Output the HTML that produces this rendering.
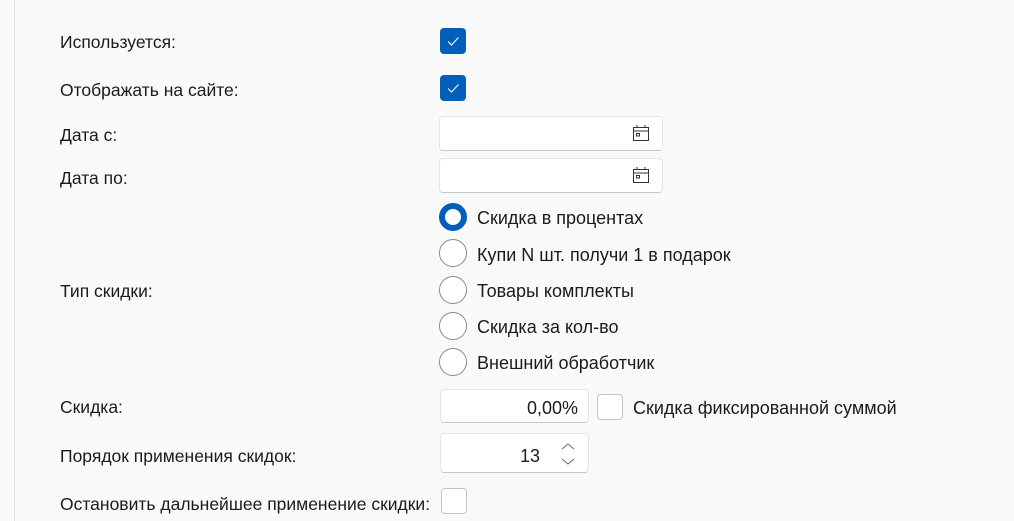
<!DOCTYPE html>
<html><head><meta charset="utf-8"><style>
body{margin:0;width:1014px;height:521px;background:#f9f9f9;font-family:"Liberation Sans",sans-serif;color:#1b1b1b;position:relative;overflow:hidden}
.vl{position:absolute;left:14px;top:0;width:1px;height:521px;background:#e2e2e2}
.t{position:absolute;font-size:17.5px;line-height:20px;white-space:nowrap}
.t2{font-size:18px}
.cb{position:absolute;width:26px;height:26px;border-radius:4px;background:#005fb8;box-sizing:border-box}
.cb.e{background:#fff;border:1px solid #c5c5c5}
.box{position:absolute;background:#fff;border:1px solid #e5e5e5;border-bottom-color:#c8c8c8;border-radius:4px;box-sizing:border-box}
.r{position:absolute;left:439px;width:28px;height:28px;border-radius:50%;background:#fff;border:1px solid #8a8a8a;box-sizing:border-box}
.r.on{border:6px solid #005fb8}
</style></head><body>
<div class="vl"></div>
<div class="t" style="left:60px;top:32px">Используется:</div>
<div class="cb" style="left:440px;top:28px"><svg width="26" height="26"><path d="M8 13.5l3.5 3.5 7-7.5" fill="none" stroke="#fff" stroke-width="1.1"/></svg></div>
<div class="t" style="left:60px;top:80px">Отображать на сайте:</div>
<div class="cb" style="left:440px;top:75px"><svg width="26" height="26"><path d="M8 13.5l3.5 3.5 7-7.5" fill="none" stroke="#fff" stroke-width="1.1"/></svg></div>
<div class="t" style="left:60px;top:125px">Дата с:</div>
<div class="box" style="left:439px;top:116px;width:224px;height:35px"><svg style="position:absolute;left:191px;top:6px" width="20" height="20"><rect x="2.5" y="4.5" width="15" height="13" fill="none" stroke="#333" stroke-width="1"/><path d="M2.5 8h15M6 2v3M14 2v3" stroke="#333"/><rect x="5.5" y="10.5" width="3" height="2.5" fill="none" stroke="#333"/></svg></div>
<div class="t" style="left:60px;top:168px">Дата по:</div>
<div class="box" style="left:439px;top:158px;width:224px;height:35px"><svg style="position:absolute;left:191px;top:6px" width="20" height="20"><rect x="2.5" y="4.5" width="15" height="13" fill="none" stroke="#333" stroke-width="1"/><path d="M2.5 8h15M6 2v3M14 2v3" stroke="#333"/><rect x="5.5" y="10.5" width="3" height="2.5" fill="none" stroke="#333"/></svg></div>
<div class="r on" style="top:203px"></div><div class="t t2" style="left:477px;top:208px">Скидка в процентах</div>
<div class="r" style="top:239px"></div><div class="t t2" style="left:477px;top:245px">Купи N шт. получи 1 в подарок</div>
<div class="r" style="top:276px"></div><div class="t t2" style="left:477px;top:281px">Товары комплекты</div>
<div class="r" style="top:312px"></div><div class="t t2" style="left:477px;top:317px">Скидка за кол-во</div>
<div class="r" style="top:348px"></div><div class="t t2" style="left:477px;top:353px">Внешний обработчик</div>
<div class="t" style="left:60px;top:281px">Тип скидки:</div>
<div class="t" style="left:60px;top:397px">Скидка:</div>
<div class="box" style="left:440px;top:389px;width:149px;height:34px"><span class="t t2" style="right:10px;top:8px">0,00%</span></div>
<div class="cb e" style="left:597px;top:394px"></div>
<div class="t t2" style="left:633px;top:398px">Скидка фиксированной суммой</div>
<div class="t" style="left:60px;top:446px">Порядок применения скидок:</div>
<div class="box" style="left:440px;top:433px;width:149px;height:40px"><span class="t t2" style="right:48px;top:12px">13</span><svg style="position:absolute;left:118px;top:5px" width="18" height="30"><path d="M3 10l6-5 6 5M3 20l6 5 6-5" fill="none" stroke="#666" stroke-width="1"/></svg></div>
<div class="t" style="left:60px;top:494px">Остановить дальнейшее применение скидки:</div>
<div class="cb e" style="left:441px;top:488px"></div>
</body></html>
